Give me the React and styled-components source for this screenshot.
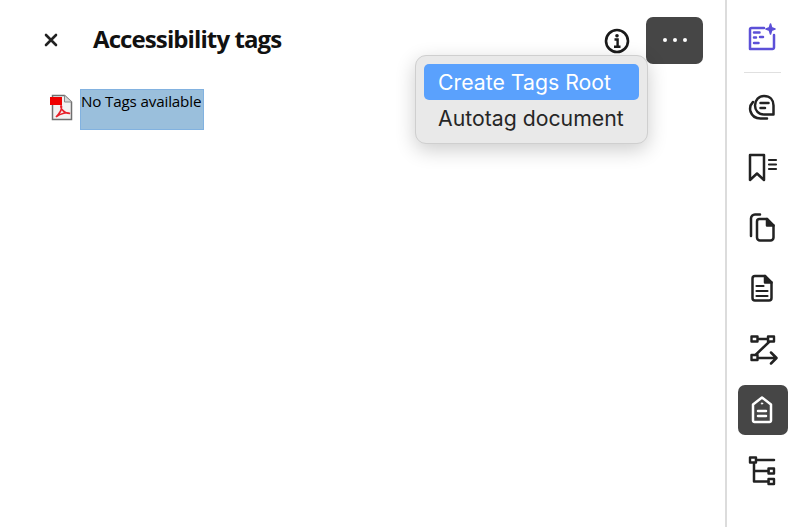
import React from 'react'
import styled, { createGlobalStyle } from 'styled-components'

const GlobalStyle = createGlobalStyle`
  html, body {
    margin: 0;
    padding: 0;
    background: #fff;
  }
  body {
    font-family: 'Open Sans', 'Liberation Sans', sans-serif;
    color: #000;
  }
`

const Page = styled.div`
  display: flex;
  width: 800px;
  height: 527px;
  overflow: hidden;
`

const Panel = styled.main`
  position: relative;
  flex: 1;
  padding: 17px 22px 0 38px;
`

const Header = styled.header`
  display: flex;
  align-items: center;
  height: 47px;
`

const CloseButton = styled.div`
  display: flex;
  align-items: center;
  justify-content: center;
  width: 26px;
  height: 46px;
  margin: 0 29px 2px 0;
`

const Title = styled.h1`
  flex: 1;
  margin: 0 0 4px;
  font-size: 24px;
  font-weight: 700;
  letter-spacing: -0.9px;
  line-height: 43px;
  color: #111;
`

const InfoIcon = styled.div`
  display: flex;
  width: 26px;
  height: 26px;
  margin-right: 16px;
`

const MoreButton = styled.div`
  display: flex;
  align-items: center;
  justify-content: center;
  box-sizing: border-box;
  gap: 6px;
  width: 57px;
  height: 47px;
  padding-bottom: 2px;
  border-radius: 7px;
  background: #464646;
`

const Dot = styled.span`
  width: 4px;
  height: 4px;
  border-radius: 50%;
  background: #fff;
`

const TagRow = styled.div`
  display: flex;
  align-items: flex-start;
  gap: 7px;
  margin: 25px 0 0 11px;
`

const PdfIcon = styled.div`
  width: 24px;
  height: 27px;
  margin-top: 5px;
`

const TagLabel = styled.div`
  box-sizing: border-box;
  width: 124px;
  height: 41px;
  padding: 0;
  border: 1px solid #82b2e0;
  background: #9abfdc;
  font-size: 15.2px;
  line-height: 22px;
  letter-spacing: -0.16px;
  white-space: nowrap;
  color: #000;
`

const Menu = styled.div`
  position: absolute;
  top: 55px;
  left: 415px;
  box-sizing: border-box;
  width: 233px;
  height: 89px;
  padding: 8px;
  border: 1px solid #cfcfcf;
  border-radius: 11px;
  background: #e9e9e9;
  box-shadow: 0 6px 20px rgba(0, 0, 0, 0.2);
`

const MenuItem = styled.div`
  height: 36px;
  padding-left: 14px;
  border-radius: 5px;
  background: ${p => (p.$active ? '#5aa1fd' : 'transparent')};
  color: ${p => (p.$active ? '#fff' : '#262626')};
  font-family: Inter, 'Liberation Sans', sans-serif;
  font-size: 21.25px;
  line-height: 36px;
  white-space: nowrap;
`

const Rail = styled.aside`
  display: flex;
  flex-direction: column;
  align-items: center;
  box-sizing: border-box;
  width: 75px;
  padding: 12px 2px 0 0;
  border-left: 2px solid #dcdcdc;
`

const RailButton = styled.div`
  display: flex;
  align-items: center;
  justify-content: center;
  flex: none;
  width: 50px;
  height: 50px;
  margin-bottom: ${p => p.$gap || 10.5}px;
  border-radius: 7px;
  background: ${p => (p.$active ? '#464646' : 'transparent')};
  color: ${p => (p.$active ? '#fff' : '#222')};

  svg {
    margin-right: 2px;
  }
`

const Divider = styled.div`
  flex: none;
  width: 37px;
  height: 1px;
  margin-bottom: 9px;
  background: #e0e0e0;
`

const RailSvg = ({ children, color }) => (
  <svg width="32" height="32" viewBox="0 0 32 32" fill="none" stroke={color || 'currentColor'} strokeWidth="2.5" strokeLinecap="round" strokeLinejoin="round">
    {children}
  </svg>
)

const CloseGlyph = () => (
  <svg width="14" height="14" viewBox="0 0 14 14" fill="none" stroke="#222" strokeWidth="2.6" strokeLinecap="round">
    <path d="M2 2l10 10M12 2L2 12" />
  </svg>
)

const InfoGlyph = () => (
  <svg width="26" height="26" viewBox="0 0 26 26" fill="none" stroke="#1a1a1a">
    <circle cx="13" cy="13" r="11" strokeWidth="2.6" />
    <circle cx="13" cy="7.8" r="1.8" fill="#1a1a1a" stroke="none" />
    <path d="M10.5 11.5H13.6V18.5M10 18.8H16.5" strokeWidth="2.4" />
  </svg>
)

const PdfGlyph = () => (
  <svg width="24" height="27" viewBox="0 0 24 27" fill="none">
    <path d="M3.5 1.5H15.5L22.5 8V25.5H3.5Z" fill="#f2f2f2" stroke="#6f6f6f" strokeWidth="1.5" />
    <path d="M15.5 1.5V8H22.5" fill="#d8d8d8" stroke="#888" strokeWidth="1" />
    <rect x="1" y="3" width="12" height="8" fill="#f00000" />
    <path d="M7 23C10 20 13 16 12.5 12.5C12 10.5 11 13 13 15.5C15 18 18 19.5 21 19.5C18 18 12 19 7 23Z" stroke="#e8202a" strokeWidth="1.6" />
  </svg>
)

const icons = [
  <RailSvg color="#5c50d8" key="ai">
    <path d="M18 7H5.5A1.5 1.5 0 0 0 4 8.5V28H26.5A1.5 1.5 0 0 0 28 26.5V14" />
    <path d="M8 11.5H13.5M8 16.5H10M14 16H17M8 22H12.5" />
    <path d="M24.5 3L25.6 6.8L29 8L25.6 9.2L24.5 13L23.4 9.2L20 8L23.4 6.8Z" fill="#5c50d8" strokeWidth="1.6" />
  </RailSvg>,
  <RailSvg key="comments">
    <path d="M18 5C24 5 27.5 9 27.5 14.5V23.5H18C12.5 23.5 9 19.5 9 14.5C9 9 13 5 18 5Z" />
    <path d="M14.5 12H22.5M14.5 17H19" />
    <path d="M7 11C4.5 13.5 3.5 17 4.5 20.5C6 25 10 27.5 14.5 27.5H21" />
  </RailSvg>,
  <RailSvg key="bookmark">
    <path d="M4 3H18V28L11 21.5L4 28Z" />
    <path d="M23 8H30M23 12.5H30M23 17H30" strokeWidth="2.2" />
  </RailSvg>,
  <RailSvg key="pages">
    <path d="M14 2.5H9A4 4 0 0 0 5 6.5V24" />
    <path d="M13.5 7H21L27.5 13.5V25.5A3 3 0 0 1 24.5 28.5H14A3 3 0 0 1 11 25.5V9.5A2.5 2.5 0 0 1 13.5 7Z" />
    <path d="M21 7V13.5H27.5" fill="currentColor" />
  </RailSvg>,
  <RailSvg key="doc">
    <path d="M9 3H19L25.5 9.5V25A2.5 2.5 0 0 1 23 27.5H9A2.5 2.5 0 0 1 6.5 25V5.5A2.5 2.5 0 0 1 9 3Z" />
    <path d="M19 3V9.5H25.5" fill="currentColor" />
    <path d="M10.5 13H17.5M10.5 18H21.5M10.5 23H21.5" strokeWidth="2.2" />
  </RailSvg>,
  <RailSvg key="order">
    <rect x="5.5" y="3.5" width="6" height="5" strokeWidth="2.4" />
    <rect x="22" y="3.5" width="6" height="5" strokeWidth="2.4" />
    <rect x="5.5" y="22" width="6" height="5" strokeWidth="2.4" />
    <path d="M12 6H22M23 9L10 21.5M12 25H30M25 19.5L30.5 25L25 30.5" />
  </RailSvg>,
  <RailSvg key="tags">
    <path d="M16 3.5L25 10.5V26.5A1.5 1.5 0 0 1 23.5 28H8.5A1.5 1.5 0 0 1 7 26.5V10.5Z" />
    <circle cx="16" cy="9.5" r="0.7" fill="currentColor" strokeWidth="1" />
    <path d="M12 17H20M12 22H20" />
  </RailSvg>,
  <RailSvg key="tree">
    <rect x="4" y="3.5" width="6" height="5" strokeWidth="2.4" />
    <rect x="22.5" y="14.5" width="5.5" height="5" strokeWidth="2.4" />
    <rect x="22.5" y="25" width="5.5" height="5" strokeWidth="2.4" />
    <path d="M10 6H28M8 9V27.5H22.5M8 17H22.5" />
  </RailSvg>,
]

const App = () => (
  <Page>
    <GlobalStyle />
    <Panel>
      <Header>
        <CloseButton><CloseGlyph /></CloseButton>
        <Title>Accessibility tags</Title>
        <InfoIcon><InfoGlyph /></InfoIcon>
        <MoreButton><Dot /><Dot /><Dot /></MoreButton>
      </Header>
      <TagRow>
        <PdfIcon><PdfGlyph /></PdfIcon>
        <TagLabel>No Tags available</TagLabel>
      </TagRow>
      <Menu>
        <MenuItem $active>Create Tags Root</MenuItem>
        <MenuItem>Autotag document</MenuItem>
      </Menu>
    </Panel>
    <Rail>
      <RailButton $gap={10}>{icons[0]}</RailButton>
      <Divider />
      {icons.slice(1).map((icon, i) => (
        <RailButton key={i} $active={i === 5}>{icon}</RailButton>
      ))}
    </Rail>
  </Page>
)

export default App
